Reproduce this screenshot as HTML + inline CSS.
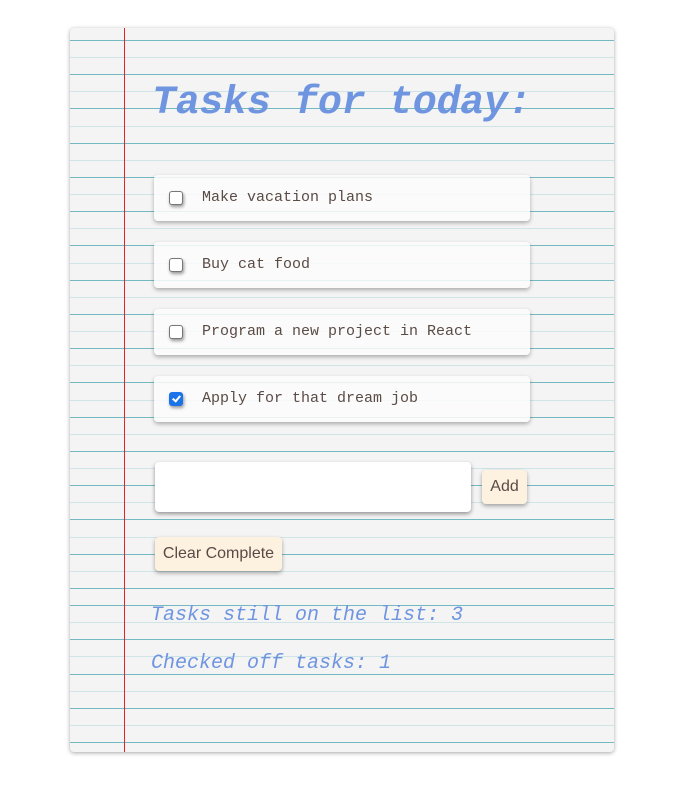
<!DOCTYPE html>
<html><head><style>
html,body{margin:0;padding:0;background:#fff;width:675px;height:796px;overflow:hidden}
.paper{position:absolute;left:70px;top:28px;width:544px;height:724px;background-color:#f4f4f4;border-radius:4px;box-shadow:0 1px 4px rgba(0,0,0,.35);overflow:hidden}
.l{position:absolute;left:0;width:100%;height:1px;background:#74b9c2}
.l.b{background:#cfe4e7}
.red{position:absolute;left:54px;top:0;width:1px;height:100%;background:#e8202a}
h1{position:absolute;left:82px;top:53px;margin:0;font:italic bold 40px "Liberation Mono",monospace;color:#6f95e0;letter-spacing:-0.3px}
.card{position:absolute;left:84px;width:376px;height:46px;background:rgba(252,252,252,.85);border-radius:4px;box-shadow:0 2px 4px rgba(0,0,0,.3)}
.cb{position:absolute;left:15px;top:16px;width:12px;height:12px;border:1px solid #777;border-radius:3px;background:#fff;box-shadow:1px 2px 3px rgba(0,0,0,.4)}
.cb.on{background:#1a73e8;border-color:#1a73e8}
.cb.on:after{content:"";position:absolute;left:3.5px;top:1px;width:3px;height:6px;border:solid #fff;border-width:0 2px 2px 0;transform:rotate(40deg)}
.card span{position:absolute;left:48px;top:14px;font:15px "Liberation Mono",monospace;color:#5b4b45}
.inp{position:absolute;left:85px;top:434px;width:316px;height:50px;background:#fff;border-radius:4px;box-shadow:0 2px 4px rgba(0,0,0,.4)}
.btn{position:absolute;background:#fdf1e0;border-radius:4px;box-shadow:0 2px 4px rgba(0,0,0,.35);font:16px "Liberation Sans",sans-serif;color:#5b4b45;text-align:center}
.st{position:absolute;left:81px;font:italic 20px "Liberation Mono",monospace;color:#6f95e0}
</style></head><body>
<div class="paper">
<div class="l" style="top:12px"></div><div class="l b" style="top:29px"></div>
<div class="l" style="top:46px"></div><div class="l b" style="top:63px"></div>
<div class="l" style="top:80px"></div><div class="l b" style="top:98px"></div>
<div class="l" style="top:115px"></div><div class="l b" style="top:132px"></div>
<div class="l" style="top:149px"></div><div class="l b" style="top:166px"></div>
<div class="l" style="top:183px"></div><div class="l b" style="top:200px"></div>
<div class="l" style="top:217px"></div><div class="l b" style="top:235px"></div>
<div class="l" style="top:252px"></div><div class="l b" style="top:269px"></div>
<div class="l" style="top:286px"></div><div class="l b" style="top:303px"></div>
<div class="l" style="top:320px"></div><div class="l b" style="top:337px"></div>
<div class="l" style="top:354px"></div><div class="l b" style="top:372px"></div>
<div class="l" style="top:389px"></div><div class="l b" style="top:406px"></div>
<div class="l" style="top:423px"></div><div class="l b" style="top:440px"></div>
<div class="l" style="top:457px"></div><div class="l b" style="top:474px"></div>
<div class="l" style="top:491px"></div><div class="l b" style="top:509px"></div>
<div class="l" style="top:526px"></div><div class="l b" style="top:543px"></div>
<div class="l" style="top:560px"></div><div class="l" style="top:577px"></div>
<div class="l b" style="top:594px"></div><div class="l" style="top:611px"></div>
<div class="l b" style="top:628px"></div><div class="l" style="top:646px"></div>
<div class="l b" style="top:663px"></div><div class="l" style="top:680px"></div>
<div class="l b" style="top:697px"></div><div class="l" style="top:714px"></div>
<div class="red"></div>
<h1>Tasks for today:</h1>
<div class="card" style="top:147px"><div class="cb"></div><span>Make vacation plans</span></div>
<div class="card" style="top:214px"><div class="cb"></div><span>Buy cat food</span></div>
<div class="card" style="top:281px"><div class="cb"></div><span>Program a new project in React</span></div>
<div class="card" style="top:348px"><div class="cb on"></div><span>Apply for that dream job</span></div>
<div class="inp"></div>
<div class="btn" style="left:412px;top:442px;width:45px;height:34px;line-height:34px">Add</div>
<div class="btn" style="left:85px;top:509px;width:127px;height:34px;line-height:34px">Clear Complete</div>
<div class="st" style="top:576px">Tasks still on the list: 3</div>
<div class="st" style="top:624px">Checked off tasks: 1</div>
</div>
</body></html>
